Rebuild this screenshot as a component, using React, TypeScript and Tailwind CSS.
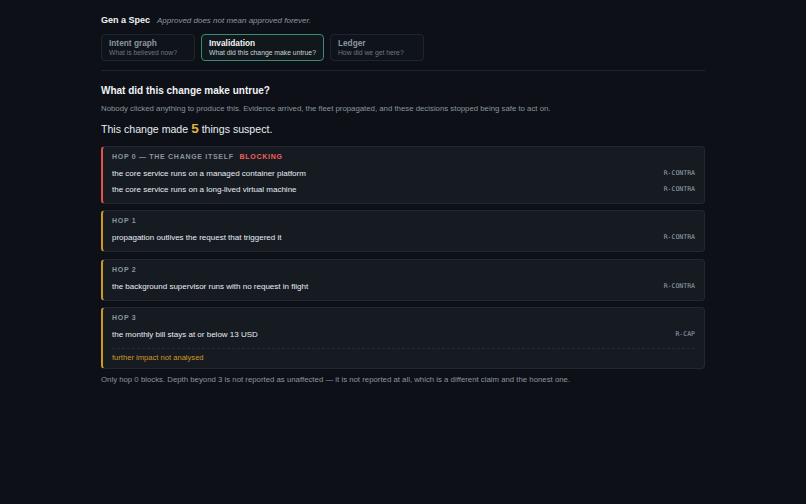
import React from "react";

type Hop = {
  label: string;
  blocking?: boolean;
  rows: { text: string; code: string }[];
  note?: string;
};

const HOPS: Hop[] = [
  {
    label: "Hop 0 — the change itself",
    blocking: true,
    rows: [
      { text: "the core service runs on a managed container platform", code: "R-CONTRA" },
      { text: "the core service runs on a long-lived virtual machine", code: "R-CONTRA" },
    ],
  },
  {
    label: "Hop 1",
    rows: [{ text: "propagation outlives the request that triggered it", code: "R-CONTRA" }],
  },
  {
    label: "Hop 2",
    rows: [{ text: "the background supervisor runs with no request in flight", code: "R-CONTRA" }],
  },
  {
    label: "Hop 3",
    rows: [{ text: "the monthly bill stays at or below 13 USD", code: "R-CAP" }],
    note: "further impact not analysed",
  },
];

const TABS = [
  { title: "Intent graph", sub: "What is believed now?", active: false },
  { title: "Invalidation", sub: "What did this change make untrue?", active: true },
  { title: "Ledger", sub: "How did we get here?", active: false },
];

function HopCard({ hop }: { hop: Hop }) {
  return (
    <div
      className={
        "rounded-[4px] border border-[#222832] border-l-2 bg-[#161b22] px-[9px] pt-[4px] pb-[5px] " +
        (hop.blocking ? "border-l-[#e5534b]" : "border-l-[#d29922]")
      }
    >
      <div className="flex items-center gap-[6px] text-[7px] font-bold uppercase leading-[12px] tracking-[0.1em]">
        <span className="text-[#8b949e]">{hop.label}</span>
        {hop.blocking && <span className="text-[#f0605a]">Blocking</span>}
      </div>
      <div className="mt-[3px] flex flex-col">
        {hop.rows.map((r, i) => (
          <div key={i} className="flex h-[16px] items-center justify-between">
            <span className="text-[8px] text-[#e6edf3]">{r.text}</span>
            <span className="font-['DejaVu_Sans_Mono',monospace] text-[6.5px] text-[#9aa4af]">{r.code}</span>
          </div>
        ))}
      </div>
      {hop.note && (
        <div className="mt-[5px] border-t border-dashed border-[#262c36] pt-[3px] text-[7.6px] leading-[11px] text-[#d29922]">
          {hop.note}
        </div>
      )}
    </div>
  );
}

export default function App() {
  return (
    <main className="min-h-screen w-full bg-[#0d1117] font-['Liberation_Sans',Arial,sans-serif] text-[#e6edf3]">
      <div className="mx-auto w-[604px] pt-[14px]">
        <div className="flex items-baseline gap-[7px]">
          <h1 className="text-[9px] font-bold text-[#f0f3f6]">Gen a Spec</h1>
          <span className="text-[8px] italic text-[#8b949e]">Approved does not mean approved forever.</span>
        </div>

        <div className="mt-[6px] flex gap-[6px]">
          {TABS.map((t) => (
            <div
              key={t.title}
              className={
                "flex h-[27px] flex-col justify-center rounded-[4px] border px-[7px] " +
                (t.active
                  ? "border-[#3b8a78] bg-[#10181b]"
                  : "w-[94px] border-[#1f252e] bg-[#0f141b]")
              }
            >
              <span
                className={
                  "text-[8.3px] font-bold leading-[10px] " +
                  (t.active ? "text-[#f0f3f6]" : "text-[#8b949e]")
                }
              >
                {t.title}
              </span>
              <span
                className={
                  "text-[6.8px] leading-[9px] " + (t.active ? "text-[#c9d1d9]" : "text-[#6e7681]")
                }
              >
                {t.sub}
              </span>
            </div>
          ))}
        </div>

        <div className="mt-[9px] h-px bg-[#1f252e]" />

        <h2 className="mt-[13px] text-[10px] font-bold leading-[14px] text-[#f0f3f6]">
          What did this change make untrue?
        </h2>
        <p className="mt-[5px] text-[7.8px] leading-[11px] text-[#8b949e]">
          Nobody clicked anything to produce this. Evidence arrived, the fleet propagated, and these decisions stopped being safe to act on.
        </p>

        <p className="mt-[7px] flex items-baseline text-[10.6px] leading-[16px] text-[#e6edf3]">
          This change made
          <span className="mx-[3px] text-[13.5px] font-bold text-[#e3b341]">5</span>
          things suspect.
        </p>

        <div className="mt-[9px] flex flex-col gap-[6.5px]">
          {HOPS.map((h) => (
            <HopCard key={h.label} hop={h} />
          ))}
        </div>

        <p className="mt-[5px] text-[7.8px] leading-[11px] text-[#8b949e]">
          Only hop 0 blocks. Depth beyond 3 is not reported as unaffected — it is not reported at all, which is a different claim and the honest one.
        </p>
      </div>
    </main>
  );
}
